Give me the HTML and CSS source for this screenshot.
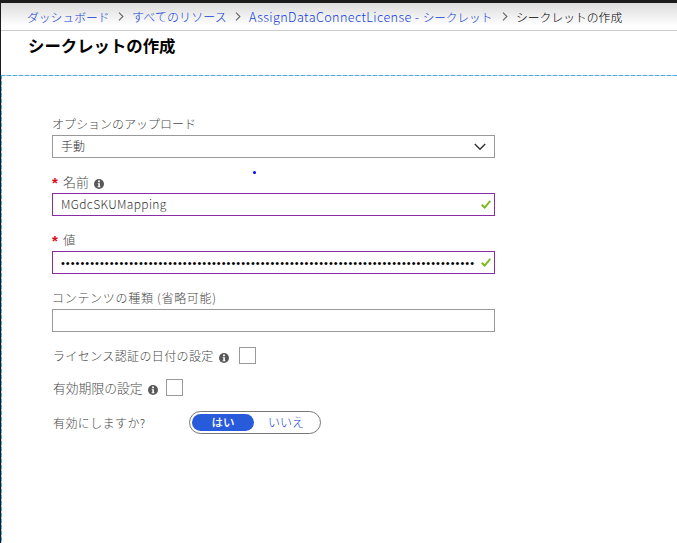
FILE: index.html
```html
<!DOCTYPE html>
<html lang="ja">
<head>
<meta charset="utf-8">
<title>シークレットの作成</title>
<link rel="stylesheet" href="styles.css">
</head>
<body>
<svg width="0" height="0" class="defs"><defs>
<symbol id="sep" viewBox="0 0 6 9"><path d="M1 .7 4.9 4.5 1 8.3" fill="none" stroke="#666" stroke-width="1.1"/></symbol>
<symbol id="tick" viewBox="0 0 10 9"><path d="M.7 4.8 3.7 7.6 9.3 .8" fill="none" stroke="#7fba23" stroke-width="2"/></symbol>
<symbol id="info" viewBox="0 0 10 10"><circle cx="5" cy="5" r="5" fill="#595959"/><path d="M4.1 1.6h1.8v1.6H4.1zM3.7 4.2h2.2v3.2h.6v.9h-3v-.9h.8V5.1h-.6z" fill="#fff"/></symbol>
</defs></svg>
<nav class="crumbs">
<a class="c1">ダッシュボード</a><svg class="sep"><use href="#sep"/></svg>
<a class="c2">すべてのリソース</a><svg class="sep"><use href="#sep"/></svg>
<a class="c3"><span class="latin">AssignDataConnectLicense - </span>シークレット</a><svg class="sep"><use href="#sep"/></svg>
<span class="c4">シークレットの作成</span>
</nav>
<header><h1>シークレットの作成</h1></header>
<main>
<div class="field"><div class="label"><span class="l-upload">オプションのアップロード</span></div>
<div class="box"><span class="v-manual">手動</span><svg class="chev" viewBox="0 0 12 8"><path d="M.8 1 6 6.2 11.2 1" fill="none" stroke="#333" stroke-width="1.4"/></svg></div></div>
<div class="field"><div class="label"><b>*</b><span class="l-name">名前</span><svg class="info"><use href="#info"/></svg></div>
<div class="box valid"><span class="v-name">MGdcSKUMapping</span><svg class="tick"><use href="#tick"/></svg></div></div>
<div class="field"><div class="label"><b>*</b><span class="l-value">値</span></div>
<div class="box valid"><span class="dots">•••••••••••••••••••••••••••••••••••••••••••••••••••••••••••••••••••••••••••••••••••••</span><svg class="tick"><use href="#tick"/></svg></div></div>
<div class="field"><div class="label"><span class="l-type">コンテンツの種類 (省略可能)</span></div>
<div class="box"></div></div>
<div class="row"><span class="r1">ライセンス認証の日付の設定</span><svg class="info"><use href="#info"/></svg><i class="check"></i></div>
<div class="row second"><span class="r2">有効期限の設定</span><svg class="info"><use href="#info"/></svg><i class="check"></i></div>
<div class="row third"><span class="r3">有効にしますか?</span><div class="toggle"><span class="on">はい</span><span class="off">いいえ</span></div></div>
<i class="dot"></i>
</main>
</body>
</html>
```
FILE: styles.css
```css
* { box-sizing: border-box; }
body { margin: 0; height: 543px; overflow: hidden; display: flex; flex-direction: column; border-top: 3px solid #1c1b1b; border-left: 1px solid #1c1b1b; background: #fff; color: #484848; font: 300 12px/18px "Noto Sans CJK JP", sans-serif; }
.defs { position: absolute; }
.crumbs { height: 28px; flex: none; display: flex; align-items: center; padding: 0 0 0 26px; background: linear-gradient(#dcdcdc, #fff 85%); border-bottom: 1px solid #ccc; white-space: nowrap; }
.crumbs a { color: #1040d8; }
.crumbs .c1 { width: 82px; font-size: 11.8px; }
.crumbs .c2 { width: 94px; letter-spacing: .1px; }
.crumbs .c3 { width: 244px; font-size: 11.6px; }
.crumbs .c4 { color: #000; font-size: 11.8px; }
.latin { font-size: 12.6px; letter-spacing: .4px; white-space: pre; }
.sep { width: 6px; height: 9px; margin: 0 8px 0 9px; flex: none; }
header { height: 44px; flex: none; padding: 2px 0 0 27px; }
h1 { margin: 0; color: #000; font-size: 16.4px; line-height: 24px; font-weight: 700; white-space: nowrap; }
main { position: relative; flex: 1; background: repeating-linear-gradient(90deg, #45aee3 0 4px, #ccc 4px 6px) 0 0 / 100% 1px no-repeat, repeating-linear-gradient(#45aee3 0 4px, #ccc 4px 6px) 0 0 / 1px 100% no-repeat; padding: 38px 0 0 51px; }
.field { width: 443px; margin-bottom: 13px; }
.label { height: 22px; display: flex; align-items: center; white-space: nowrap; }
.label b { width: 11px; color: #e00b1c; font: 700 15px/16px "Liberation Sans", sans-serif; padding-top: 2px; }
.l-name { font-size: 13px; }
.l-value { font-size: 12.5px; }
.l-type { letter-spacing: .7px; }
.info { width: 10px; height: 10px; flex: none; margin: 4px 0 0 5px; }
.box { height: 23px; border: 1px solid #999; display: flex; align-items: center; justify-content: space-between; padding: 0 8px; color: #333; }
.v-manual { position: relative; top: -1px; }
.v-name { letter-spacing: .35px; position: relative; top: -1px; }
.valid { border-color: #8a2da5; padding-right: 3px; }
.tick { width: 10px; height: 9px; flex: none; }
.chev { width: 12px; height: 8px; flex: none; }
.dots { width: 413px; white-space: nowrap; color: #000; font: 11px/18px "Liberation Sans", sans-serif; letter-spacing: 1.02px; }
.row { height: 17px; display: flex; align-items: center; margin-top: 15px; padding-left: 1px; white-space: nowrap; }
.r1 { letter-spacing: .38px; }
.r2 { font-size: 12.8px; }
.check { width: 17px; height: 17px; border: 1px solid #999; margin-left: 10px; }
.second .check { margin-left: 8px; }
.row.third { height: 23px; margin-top: 15px; }
.r3 { width: 136px; letter-spacing: .4px; }
.toggle { width: 132px; height: 23px; display: flex; border: 1px solid #777; border-radius: 12px; padding: 2px; line-height: 16px; text-align: center; }
.on { width: 62px; height: 17px; flex: none; border-radius: 9px; background: #285bd9; color: #fff; font-weight: 500; font-size: 11.5px; }
.off { width: 65px; color: #1040d8; }
.dot { position: absolute; left: 252px; top: 96px; width: 3px; height: 3px; border-radius: 50%; background: #00f; }
```
